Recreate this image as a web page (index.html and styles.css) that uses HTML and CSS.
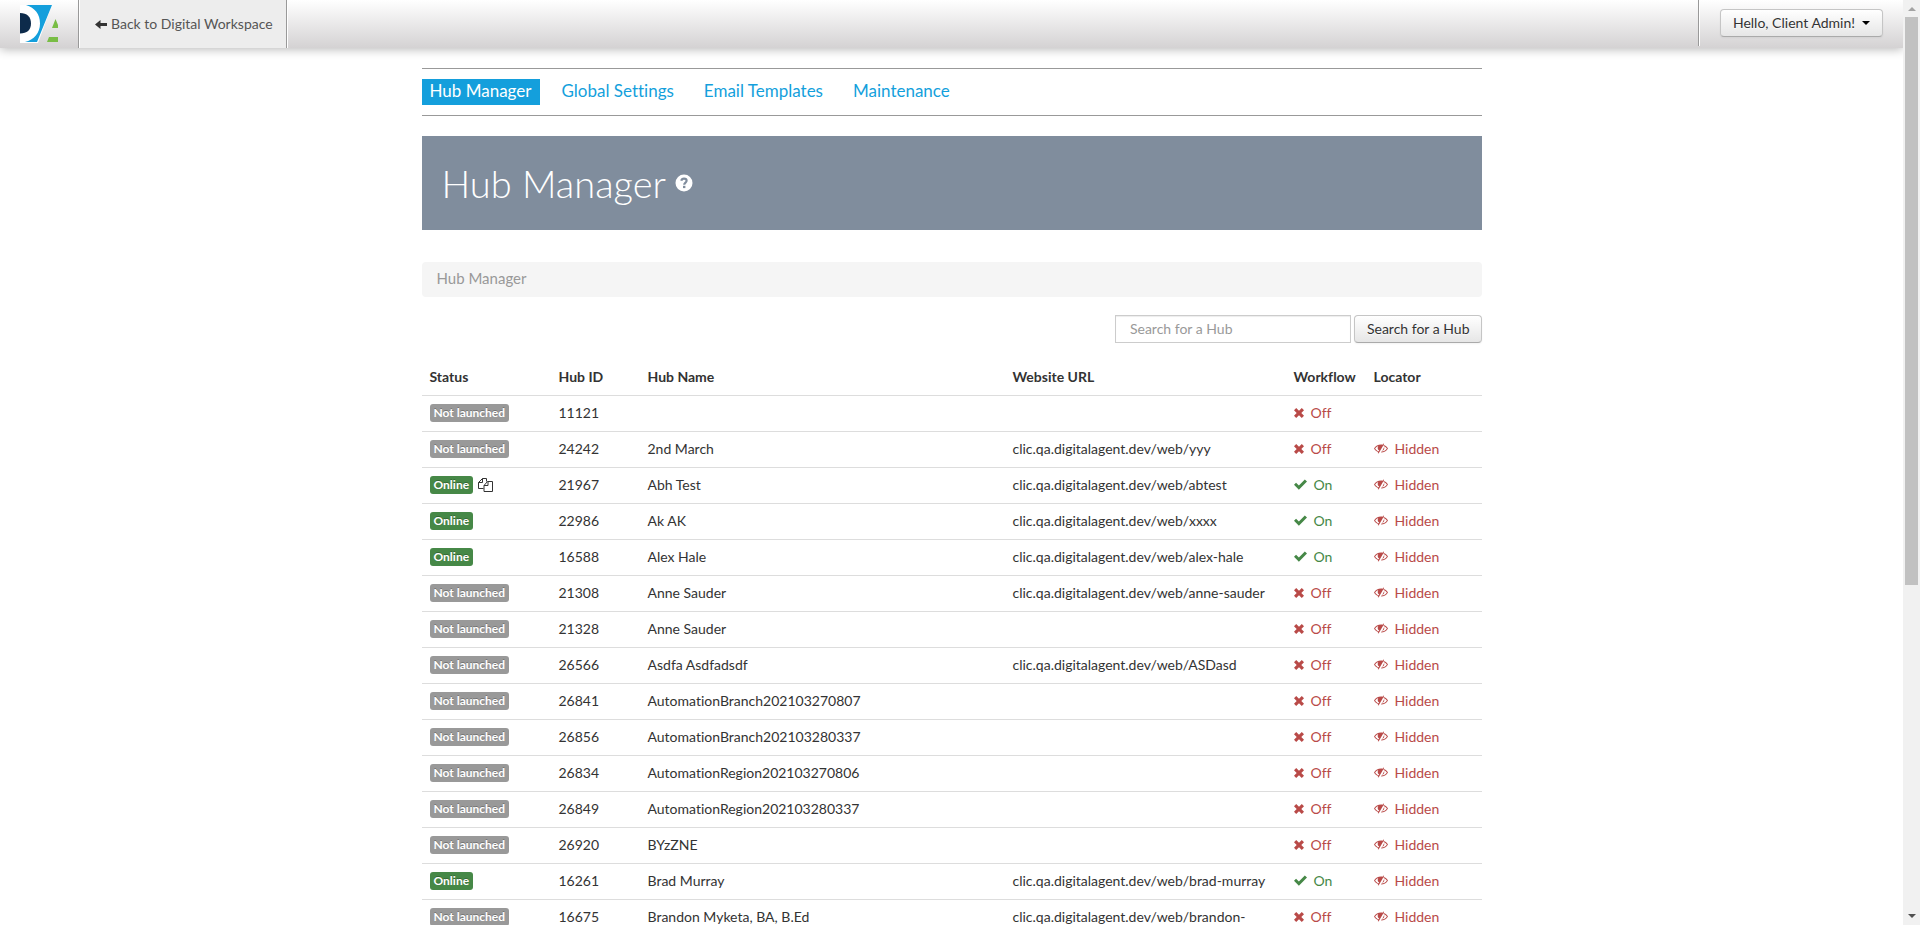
FILE: index.html
```html
<!DOCTYPE html>
<html lang="en">
<head>
<meta charset="utf-8">
<title>Hub Manager</title>
<link rel="stylesheet" href="styles.css">
</head>
<body>
<svg class="defs" aria-hidden="true">
  <symbol id="i-off" viewBox="0 0 10 10"><path d="M2.2 0 5 2.7 7.8 0 10 2.2 7.3 5 10 7.8 7.8 10 5 7.3 2.2 10 0 7.8 2.7 5 0 2.2z"/></symbol>
  <symbol id="i-on" viewBox="0 0 12 10"><path d="M0 5.2 1.9 3.3 4.5 5.9 10 .4 12 2.3 4.5 9.8z"/></symbol>
  <symbol id="i-hide" viewBox="0 0 14 11"><path fill-rule="evenodd" d="M9.3.4 10.1.9 4.6 10.6 3.7 10.1 4.3 9.1C2.500 8.400 1 7.200 0 5.500 1.600 2.900 4 1.500 7 1.500 7.600 1.500 8.100 1.600 8.600 1.700zM1.100 5.500C2 7 3.300 7.900 4.700 8.300L5.200 7.500C4.200 7 3.700 6 3.700 5 3.700 4.200 3.900 3.500 4.300 3 3 3.500 1.900 4.400 1.100 5.500zM9.700 2.100C11.500 2.700 13 3.900 14 5.500 12.500 8 10 9.500 7 9.500L7.500 8.600C9.800 8.400 11.700 7.300 12.900 5.500 12 4.300 10.900 3.400 9.600 2.900zM10.200 4.100C10.700 6 9.800 7.400 8.200 8z"/></symbol>
  <symbol id="i-copy" viewBox="0 0 15 14"><path fill="none" stroke="currentColor" d="M5.500 10.500H.500V4.500L4.500.500H8.500V3.500M4.500.500V4.500H.500M9.500 3.500H14.500V13.500H6V7.500zM10 3.500V7.500H6"/></symbol>
</svg>
<div class="page">
  <header class="topbar">
    <a class="brand" href="#" aria-label="Digital Agent">
      <svg width="38" height="38" viewBox="0 0 38 38"><path fill="#fff" d="M0 0H32L18 38H0z"/><path fill="#0d2b4b" d="M0 8C7 8 11 12 11 18.500S7 28.500 0 28.500z"/><path fill="#149fdc" d="M6 0H32L17 37H5C14 35 20 28 20 18.500S15 3 6 0z"/><path fill="#79bd45" d="M35.500 14 38 20V23H32zM29 32H38V37H27z"/></svg>
    </a>
    <a class="back" href="#"><svg width="12" height="9" viewBox="0 0 12 9"><path d="M0 4.500 5.500 0V3H12V6H5.500V9z"/></svg>Back to Digital Workspace</a>
    <div class="account"><button class="btn" type="button">Hello, Client Admin!<span class="caret"></span></button></div>
  </header>
  <main class="container">
    <nav class="tabs">
      <a class="tab active" href="#">Hub Manager</a>
      <a class="tab" href="#">Global Settings</a>
      <a class="tab" href="#">Email Templates</a>
      <a class="tab" href="#">Maintenance</a>
    </nav>
    <div class="banner">
      <h1>Hub Manager</h1>
      <svg width="18" height="18" viewBox="0 0 18 18" role="img" aria-label="Help"><circle cx="9" cy="9" r="8.500" fill="#fff"/><path fill="none" stroke="#808d9d" stroke-width="2.200" d="M6.300 6.800C6.600 5.300 7.600 4.700 9 4.700 10.500 4.700 11.600 5.500 11.600 6.800 11.600 8.600 9.200 8.500 9.200 10.700"/><path fill="#808d9d" d="M8 11.800h2.400v2.300H8z"/></svg>
    </div>
    <div class="breadcrumb">Hub Manager</div>
    <form class="search">
      <input type="text" placeholder="Search for a Hub" aria-label="Search for a Hub">
      <button class="btn" type="button">Search for a Hub</button>
    </form>
    <table class="hubs">
      <colgroup><col class="c-status"><col class="c-id"><col class="c-name"><col class="c-url"><col class="c-flow"><col class="c-loc"></colgroup>
      <thead><tr><th>Status</th><th>Hub ID</th><th>Hub Name</th><th>Website URL</th><th>Workflow</th><th>Locator</th></tr></thead>
      <tbody id="rows"></tbody>
    </table>
  </main>
</div>
<div class="scrollbar" aria-hidden="true"><span class="up"></span><span class="thumb"></span><span class="down"></span></div>
<script src="hubs.js"></script>
</body>
</html>
```
FILE: hubs.js
```js
const site = 'clic.qa.digitalagent.dev/web/';
// [online, id, name, path, workflow on, has locator, has copies]
const hubs = [
  [0, '11121', '', '', 0, 0],
  [0, '24242', '2nd March', 'yyy', 0, 1],
  [1, '21967', 'Abh Test', 'abtest', 1, 1, 1],
  [1, '22986', 'Ak AK', 'xxxx', 1, 1],
  [1, '16588', 'Alex Hale', 'alex-hale', 1, 1],
  [0, '21308', 'Anne Sauder', 'anne-sauder', 0, 1],
  [0, '21328', 'Anne Sauder', '', 0, 1],
  [0, '26566', 'Asdfa Asdfadsdf', 'ASDasd', 0, 1],
  [0, '26841', 'AutomationBranch202103270807', '', 0, 1],
  [0, '26856', 'AutomationBranch202103280337', '', 0, 1],
  [0, '26834', 'AutomationRegion202103270806', '', 0, 1],
  [0, '26849', 'AutomationRegion202103280337', '', 0, 1],
  [0, '26920', 'BYzZNE', '', 0, 1],
  [1, '16261', 'Brad Murray', 'brad-murray', 1, 1],
  [0, '16675', 'Brandon Myketa, BA, B.Ed', 'brandon-', 0, 1]
];
const icon = (id, w, h) => `<svg width="${w}" height="${h}"><use href="#${id}"/></svg>`;
document.getElementById('rows').innerHTML = hubs.map(([online, id, name, path, on, loc, copy]) => `<tr>
<td><span class="status"><span class="label ${online ? 'online' : ''}">${online ? 'Online' : 'Not launched'}</span>${copy ? icon('i-copy', 15, 14) : ''}</span></td>
<td>${id}</td><td>${name}</td><td>${path ? site + path : ''}</td>
<td><span class="flag ${on ? 'on' : 'off'}">${on ? icon('i-on', 13, 11) + 'On' : icon('i-off', 10, 10) + 'Off'}</span></td>
<td>${loc ? `<span class="flag off">${icon('i-hide', 14, 11)}Hidden</span>` : ''}</td></tr>`).join('');
```
FILE: styles.css
```css
* { box-sizing: border-box; }
body {
  margin: 0;
  display: flex;
  height: 100vh;
  overflow: hidden;
  background: #fff;
  color: #333;
  font: 14px/20px Lato, "Open Sans", sans-serif;
  font-variant-ligatures: none;
}
a { text-decoration: none; }
.defs { position: absolute; width: 0; height: 0; }
.page { flex: 1; min-width: 0; overflow: hidden; }

.topbar {
  display: flex;
  height: 48px;
  background: linear-gradient(#fff, #d4d2d3);
  box-shadow: 0 1px 10px rgba(0, 0, 0, .3);
}
.brand { width: 78px; padding: 5px 20px; }
.brand svg { display: block; }
.back {
  display: flex;
  align-items: center;
  gap: 4px;
  padding: 0 13px 0 16px;
  background: #ededed;
  border-left: 1px solid #999;
  border-right: 1px solid #999;
  box-shadow: inset 1px 0 #fff, 1px 0 #fff;
  color: #555;
}
.back svg { fill: #333; }
.account {
  margin-left: auto;
  height: 46px;
  padding: 9px 20px 9px 21px;
  border-left: 1px solid #999;
  box-shadow: inset 1px 0 #fff;
}
.btn {
  display: inline-flex;
  align-items: center;
  justify-content: center;
  height: 28px;
  padding: 0 12px;
  border: 1px solid #c5c5c5;
  border-bottom-color: #aaa;
  border-radius: 4px;
  background: linear-gradient(#fff, #e6e6e6);
  box-shadow: 0 1px 2px rgba(0, 0, 0, .05);
  color: #333;
  font: inherit;
  text-shadow: 0 1px 1px rgba(255, 255, 255, .75);
}
.caret {
  margin-left: 7px;
  border: 4px solid transparent;
  border-top-color: #000;
  border-bottom: 0;
}

.container { max-width: 1060px; margin: 0 auto; padding-top: 20px; }
.tabs {
  display: flex;
  gap: 12px;
  padding: 10px 0;
  border: solid #999;
  border-width: 1px 0;
}
.tab { padding: 0 9px 2px; color: #149fdc; font-size: 17px; line-height: 24px; }
.tab.active { padding-left: 8px; background: #149fdc; color: #fff; }
.banner {
  display: flex;
  align-items: center;
  gap: 9px;
  height: 94px;
  margin-top: 20px;
  padding: 0 20px;
  background: #808d9d;
}
.banner h1 { margin: 0; color: #fff; font-size: 38px; font-weight: 300; line-height: 40px; }
.breadcrumb {
  margin-top: 32px;
  padding: 7px 15px 9px;
  border-radius: 4px;
  background: #f5f5f5;
  color: #999;
  font-size: 15px;
  line-height: 19px;
}
.search { display: flex; justify-content: flex-end; gap: 3px; margin: 18px 0 17px; }
.search .btn { padding: 0 11px 1px 12px; }
.search input {
  width: 236px;
  height: 28px;
  padding: 0 14px 1px;
  border: 1px solid #ccc;
  box-shadow: inset 0 1px 1px rgba(0, 0, 0, .075);
  font: inherit;
}
.search input::placeholder { color: #999; }

.hubs { width: 100%; table-layout: fixed; border-collapse: collapse; line-height: 19px; }
.hubs th, .hubs td { padding: 7px 8px 9px; text-align: left; vertical-align: top; }
.hubs td { border-top: 1px solid #ddd; }
.c-status { width: 129px; }
.c-id { width: 89px; }
.c-url { width: 281px; }
.c-flow { width: 80px; }
.c-loc { width: 116px; }
.status, .flag { display: flex; align-items: center; height: 19px; }
.status { gap: 5px; }
.flag { gap: 7px; }
.flag svg { fill: currentColor; }
.label {
  padding: 2px 4px;
  border-radius: 3px;
  background: #999;
  color: #fff;
  font-size: 12px;
  font-weight: 700;
  line-height: 14px;
  text-shadow: 0 -1px 0 rgba(0, 0, 0, .25);
}
.label.online { background: #468847; }
.on { color: #468847; }
.off { color: #b94a48; }

.scrollbar {
  display: flex;
  flex-direction: column;
  align-items: center;
  width: 17px;
  padding: 7px 0;
  background: #f1f1f1;
}
.up { border: 4px solid transparent; border-bottom-color: #a3a3a3; border-top: 0; }
.thumb { width: 13px; height: 568px; margin-top: 6px; background: #c1c1c1; }
.down { margin-top: auto; border: 4px solid transparent; border-top-color: #505050; border-bottom: 0; }
```
